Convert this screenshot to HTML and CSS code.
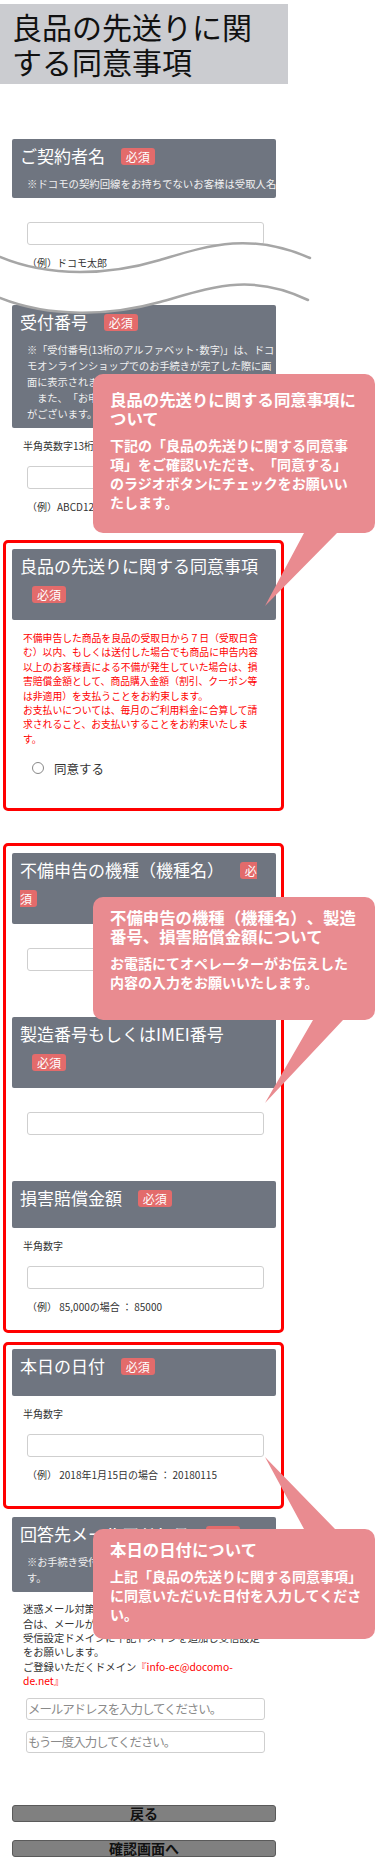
FILE: index.html
```html
<!DOCTYPE html>
<html lang="ja">
<head>
    <meta charset="UTF-8">
    <meta name="viewport" content="width=device-width, initial-scale=1.0">
    <title>良品の先送りに関する同意事項</title>
    <link rel="stylesheet" href="styles.css">
</head>
<body>
    <div class="page">
        <h1 class="page-title">良品の先送りに関する同意事項</h1>

        <section class="field field-contract">
            <div class="field-head has-note">
                <h2 class="field-title">ご契約者名 <span class="badge">必須</span></h2>
                <p class="field-note note-wide">※ドコモの契約回線をお持ちでないお客様は受取人名</p>
            </div>
            <div class="field-body">
                <input type="text" class="text-input first">
                <p class="example">（例）ドコモ太郎</p>
            </div>
        </section>

        <!-- page cut -->
        <svg class="cut-wave" width="312" height="95" viewBox="0 0 312 95">
            <path d="M0,27 C50,48 110,45 160,30 C210,15 250,2 310,28 L308,70 C250,42 210,58 160,72 C110,86 50,88 0,68 Z" fill="#fff"/>
            <path d="M0,27 C50,48 110,45 160,30 C210,15 250,2 310,28" fill="none" stroke="#a6a6a6" stroke-width="2.5" stroke-linecap="round"/>
            <path d="M0,68 C50,88 110,86 160,72 C210,58 250,42 308,70" fill="none" stroke="#a6a6a6" stroke-width="2.5" stroke-linecap="round"/>
        </svg>

        <section class="field field-receipt">
            <div class="field-head has-note">
                <h2 class="field-title">受付番号 <span class="badge">必須</span></h2>
                <p class="field-note">※「受付番号(13桁のアルファベット･数字)」は、ドコ<br>モオンラインショップでのお手続きが完了した際に画<br>面に表示されます。<br>　また、「お申込み受付のお知らせ」メールにも記載<br>がございます。</p>
            </div>
            <div class="field-body">
                <p class="label">半角英数字13桁で入力してください</p>
                <input type="text" class="text-input">
                <p class="example">（例）ABCD123456789</p>
            </div>
        </section>

        <section class="box box-agree">
            <div class="field-head">
                <h2 class="field-title">良品の先送りに関する同意事項 <span class="badge">必須</span></h2>
            </div>
            <div class="field-body">
                <p class="notice">不備申告した商品を良品の受取日から７日（受取日含む）以内、もしくは送付した場合でも商品に申告内容以上のお客様責による不備が発生していた場合は、損害賠償金額として、商品購入金額（割引、クーポン等は非適用）を支払うことをお約束します。<br>お支払いについては、毎月のご利用料金に合算して請求されること、お支払いすることをお約束いたします。</p>
                <label class="agree"><input type="radio" name="agree" class="radio">同意する</label>
            </div>
        </section>

        <section class="box box-device">
            <div class="field-head">
                <h2 class="field-title">不備申告の機種（機種名） <span class="badge">必須</span></h2>
            </div>
            <div class="field-body">
                <input type="text" class="text-input first">
            </div>
            <div class="field-head spaced">
                <h2 class="field-title">製造番号もしくはIMEI番号<br><span class="badge">必須</span></h2>
            </div>
            <div class="field-body">
                <input type="text" class="text-input first">
            </div>
            <div class="field-head spaced">
                <h2 class="field-title">損害賠償金額 <span class="badge">必須</span></h2>
            </div>
            <div class="field-body">
                <p class="label">半角数字</p>
                <input type="text" class="text-input">
                <p class="example">（例） 85,000の場合 ： 85000</p>
            </div>
        </section>

        <section class="box box-date">
            <div class="field-head">
                <h2 class="field-title">本日の日付 <span class="badge">必須</span></h2>
            </div>
            <div class="field-body">
                <p class="label">半角数字</p>
                <input type="text" class="text-input">
                <p class="example">（例） 2018年1月15日の場合 ： 20180115</p>
            </div>
        </section>

        <section class="field field-mail">
            <div class="field-head has-note">
                <h2 class="field-title">回答先メールアドレス <span class="badge">必須</span></h2>
                <p class="field-note">※お手続き受付後、ご連絡をこちらへお送りいたしま<br>す。</p>
            </div>
            <div class="field-body">
                <p class="mail-text">迷惑メール対策などでドメイン指定をされている場合は、メールが正しく届かない場合がございます。受信設定ドメインに下記ドメインを追加し受信設定をお願いします。<br>ご登録いただくドメイン<span class="domain">『info-ec@docomo-de.net』</span></p>
                <input type="text" class="text-input mail" placeholder="メールアドレスを入力してください。">
                <input type="text" class="text-input mail" placeholder="もう一度入力してください。">
            </div>
        </section>

        <div class="actions">
            <button class="btn">戻る</button>
            <button class="btn">確認画面へ</button>
        </div>

        <!-- guide balloons -->
        <div class="callout callout-1">
            <p class="callout-title">良品の先送りに関する同意事項について</p>
            <p class="callout-text">下記の「良品の先送りに関する同意事項」をご確認いただき、「同意する」のラジオボタンにチェックをお願いいたします。</p>
            <svg class="callout-tail" width="100" height="100" viewBox="0 0 100 100">
                <polygon points="51,10 84,10 84,19 12,92 51,19"/>
            </svg>
        </div>

        <div class="callout callout-2">
            <p class="callout-title">不備申告の機種（機種名）、製造番号、損害賠償金額について</p>
            <p class="callout-text">お電話にてオペレーターがお伝えした内容の入力をお願いいたします。</p>
            <svg class="callout-tail" width="100" height="100" viewBox="0 0 100 100">
                <polygon points="60,5 90,5 90,13 12,96 60,13"/>
            </svg>
        </div>

        <div class="callout callout-3">
            <p class="callout-title">本日の日付について</p>
            <p class="callout-text">上記「良品の先送りに関する同意事項」に同意いただいた日付を入力してください。</p>
            <svg class="callout-tail" width="100" height="100" viewBox="0 0 100 100">
                <polygon points="12,8 82,80 82,90 51,90 51,80"/>
            </svg>
        </div>
    </div>
</body>
</html>
```

FILE: styles.css
```css
body {
    margin: 0;
    font-family: "Noto Sans CJK JP", "Noto Sans", sans-serif;
    color: #333;
    background-color: #fff;
    text-spacing-trim: space-all;
}

.page {
    position: relative;
    width: 288px;
    padding: 4px 0 18px;
}

.page-title {
    margin: 0;
    height: 80px;
    box-sizing: border-box;
    padding: 5px 20px 0 12px;
    background-color: #cbccd0;
    font-size: 30px;
    line-height: 35px;
    font-weight: normal;
    color: #111;
}

/* fields */
.field {
    margin: 0 12px;
}

.field-contract {
    margin-top: 55px;
}

.field-contract .field-head {
    padding-bottom: 8px;
}

.field-receipt {
    margin-top: 35px;
}

.field-mail {
    margin-top: 8px;
}

.field-head {
    min-height: 47px;
    box-sizing: border-box;
    padding: 3px 4px 12px 8px;
    background-color: #6f7580;
    border-radius: 2px;
    color: #fff;
}

.field-head.has-note {
    padding-bottom: 6px;
}

.field-head.spaced {
    margin-top: 46px;
}

.field-title {
    margin: 0;
    padding-right: 8px;
    font-size: 17px;
    line-height: 28px;
    font-weight: normal;
}

.badge {
    margin-left: 12px;
    padding: 0 5px;
    background-color: #e36b6b;
    border-radius: 3px;
    font-size: 12px;
    line-height: 1;
    vertical-align: 1px;
    color: #fff;
}

.field-note {
    margin: 6px 0 0;
    padding-left: 7px;
    font-size: 10.2px;
    line-height: 16px;
    white-space: nowrap;
    color: #f0f0f0;
}

.note-wide {
    font-size: 10.4px;
}

.field-body {
    padding-left: 11px;
}

.label {
    margin: 11px 0 0;
    font-size: 10px;
    line-height: 14px;
}

.text-input {
    display: block;
    width: 237px;
    height: 23px;
    box-sizing: border-box;
    margin: 13px 0 0 4px;
    padding: 0 3px;
    border: 1px solid #cfcfcf;
    border-radius: 3px;
    background-color: #fff;
    font-family: inherit;
}

.text-input.first {
    margin-top: 24px;
}

.text-input.mail {
    width: 239px;
    height: 22px;
    margin: 11px 0 0 3px;
    padding: 0 1px;
    font-size: 12.5px;
    letter-spacing: -1.1px;
}

.text-input.mail::placeholder {
    color: #8a8a8a;
}

.mail-text + .text-input.mail {
    margin-top: 9px;
}

.example {
    margin: 11px 0 0 4px;
    font-size: 10px;
    line-height: 14px;
}

/* red framed groups */
.box {
    width: 281px;
    box-sizing: border-box;
    margin: 26px 0 0 3px;
    padding: 6px 5px 30px 6px;
    border: 3px solid #f00;
    border-radius: 5px;
}

.box-device {
    margin-top: 32px;
    padding-top: 7px;
    padding-bottom: 16px;
}

.box-date {
    margin-top: 9px;
    padding-top: 4px;
    padding-bottom: 24px;
}

.notice {
    width: 240px;
    margin: 11px 0 0;
    font-size: 9.8px;
    line-height: 14.4px;
    color: #f00;
}

.agree {
    display: flex;
    align-items: center;
    gap: 10px;
    height: 20px;
    margin: 12px 0 0 9px;
    font-size: 12.5px;
    color: #333;
}

.radio {
    appearance: none;
    width: 12px;
    height: 12px;
    margin: 0;
    border: 1px solid #888;
    border-radius: 50%;
    background-color: #fff;
}

.mail-text {
    width: 240px;
    margin: 10px 0 0;
    font-size: 10.3px;
    line-height: 14.4px;
}

.domain {
    color: #f00;
}

/* buttons */
.actions {
    margin: 52px 12px 0;
}

.btn {
    display: block;
    width: 100%;
    height: 17px;
    margin-top: 18px;
    padding: 0;
    border: 1px solid #5a5a5a;
    border-radius: 3px;
    background-color: #808080;
    font-family: "Noto Sans CJK JP", sans-serif;
    font-size: 14px;
    font-weight: bold;
    line-height: 15px;
    color: #111;
}

.btn:first-child {
    margin-top: 0;
}

/* overlays */
.cut-wave {
    position: absolute;
    top: 230px;
    left: 0;
}

.callout {
    position: absolute;
    left: 93px;
    width: 282px;
    box-sizing: border-box;
    padding: 11px 15px 0 17px;
    background-color: #e98b90;
    border-radius: 10px;
    color: #fff;
    font-weight: bold;
}

.callout-1 {
    top: 374px;
    height: 159px;
    padding-top: 16px;
}

.callout-2 {
    top: 897px;
    height: 123px;
}

.callout-3 {
    top: 1529px;
    height: 110px;
    padding-right: 9px;
}

.callout-title {
    margin: 0;
    font-size: 16.4px;
    line-height: 19px;
}

.callout-text {
    margin: 8px 0 0;
    font-size: 14px;
    line-height: 19px;
}

.callout-tail {
    position: absolute;
    left: 160px;
    fill: #e98b90;
}

.callout-1 .callout-tail {
    top: 140px;
}

.callout-2 .callout-tail {
    top: 110px;
}

.callout-3 .callout-tail {
    top: -80px;
}
```
